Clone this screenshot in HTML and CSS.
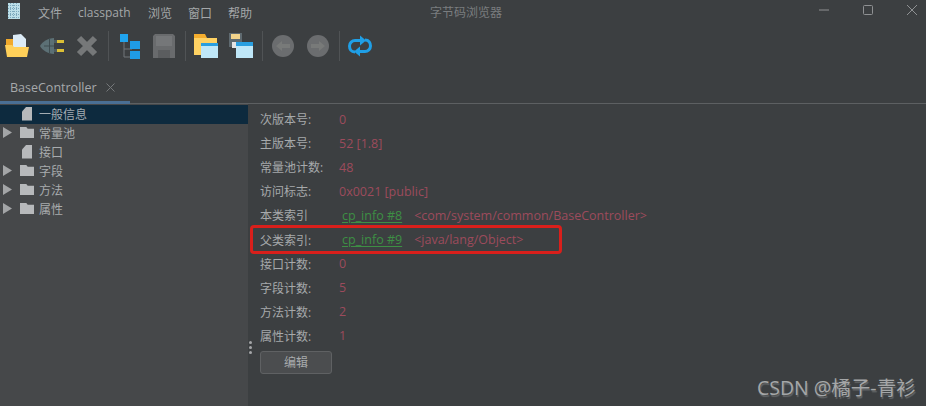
FILE: index.html
```html
<!DOCTYPE html>
<html lang="en">
<head>
    <meta charset="UTF-8">
    <title>字节码浏览器</title>
    <link rel="stylesheet" href="styles.css">
</head>
<body>
<div class="window">
    <div class="title-bar">
        <svg class="app-icon" width="12" height="16" viewBox="0 0 12 16">
            <rect width="12" height="16" fill="#bcdfe9"/>
            <path d="M0 2.5H12M0 5.5H12M0 8.5H12M0 11.5H12M0 14.5H12M2.5 0V16M5.5 0V16M8.5 0V16" stroke="#7ba8bc" stroke-width="1" stroke-dasharray="1 1"/>
        </svg>
        <div class="menu">
            <span>文件</span>
            <span class="menu-wide">classpath</span>
            <span>浏览</span>
            <span>窗口</span>
            <span>帮助</span>
        </div>
        <div class="window-title">字节码浏览器</div>
        <div class="window-buttons">
            <svg width="12" height="12" viewBox="0 0 12 12"><path d="M1 6H11" stroke="#8f9193" stroke-width="1"/></svg>
            <svg width="12" height="12" viewBox="0 0 12 12"><rect x="1.5" y="1.5" width="9" height="9" rx="1" fill="none" stroke="#8f9193"/></svg>
            <svg width="12" height="12" viewBox="0 0 12 12"><path d="M1 1L11 11M11 1L1 11" stroke="#8f9193"/></svg>
        </div>
    </div>

    <div class="toolbar">
        <!-- open -->
        <svg class="tool" width="26" height="26" viewBox="0 0 26 26">
            <path d="M2 6H9V11H20V14H2Z" fill="#f0a92c"/>
            <path d="M9 2L17 1L22 6V14H9Z" fill="#dcebf6"/>
            <path d="M1 12H8L10 14H25L23 24H3Z" fill="#ffd059"/>
        </svg>
        <!-- plug -->
        <svg class="tool" width="26" height="26" viewBox="0 0 26 26">
            <path d="M15 5V21C9 21 3 17 1 13C3 9 9 5 15 5Z" fill="#5c7075"/>
            <path d="M10 5H11V21H10Z" fill="#3f4d51"/>
            <path d="M5 13H15" stroke="#3f4d51"/>
            <rect x="18" y="7" width="7" height="3" fill="#dcbf35"/>
            <rect x="18" y="16" width="7" height="3" fill="#dcbf35"/>
            <path d="M15 7H18V10H15ZM15 16H18V19H15Z" fill="#4d5c60"/>
        </svg>
        <!-- close -->
        <svg class="tool" width="26" height="26" viewBox="0 0 26 26">
            <path d="M5 5L21 21M21 5L5 21" stroke="#767879" stroke-width="6"/>
        </svg>
        <div class="tool-sep"></div>
        <!-- tree -->
        <svg class="tool" width="26" height="26" viewBox="0 0 26 26">
            <path d="M8 8V24H16M8 16H16" stroke="#71777b" fill="none"/>
            <path d="M4 1H12V9H4Z" fill="#20a4ee"/>
            <rect x="14" y="8" width="10" height="8" fill="#1f9be6"/>
            <rect x="14" y="18" width="10" height="8" fill="#1f9be6"/>
        </svg>
        <!-- save, disabled -->
        <svg class="tool" width="26" height="26" viewBox="0 0 26 26">
            <path d="M4 1H22L24 3V25H2V3Z" fill="#696b6d"/>
            <path d="M5 3H21V13H5Z" fill="#757779"/>
            <path d="M7 17H19V25H7Z" fill="#5b5d5f"/>
        </svg>
        <div class="tool-sep"></div>
        <!-- folder with window -->
        <svg class="tool" width="26" height="26" viewBox="0 0 26 26">
            <path d="M1 1H12L14 5H24V10H1Z" fill="#f4ad2e"/>
            <path d="M1 5H24V22H1Z" fill="#ffd263"/>
            <rect x="8" y="10" width="17" height="15" fill="#bfe7f8"/>
            <rect x="8" y="10" width="17" height="3" fill="#2a9fe0"/>
        </svg>
        <!-- save with window -->
        <svg class="tool" width="26" height="26" viewBox="0 0 26 26">
            <rect x="1" y="0" width="13" height="14" fill="#5f6a70"/>
            <rect x="3" y="1" width="9" height="5" fill="#f1d28a"/>
            <rect x="4" y="9" width="7" height="6" fill="#e4e4e4"/>
            <rect x="8" y="9" width="17" height="16" fill="#bfe7f8"/>
            <rect x="8" y="9" width="17" height="4" fill="#2a9fe0"/>
        </svg>
        <div class="tool-sep"></div>
        <!-- back -->
        <svg class="tool" width="26" height="26" viewBox="0 0 26 26">
            <circle cx="13" cy="13" r="11" fill="#6b6d6f"/>
            <path d="M6 13L12 8V11H20V15H12V18Z" fill="#787a79"/>
        </svg>
        <!-- forward -->
        <svg class="tool" width="26" height="26" viewBox="0 0 26 26">
            <circle cx="13" cy="13" r="11" fill="#6b6d6f"/>
            <path d="M20 13L14 8V11H6V15H14V18Z" fill="#787a79"/>
        </svg>
        <div class="tool-sep"></div>
        <!-- refresh -->
        <svg class="tool" width="26" height="26" viewBox="0 0 26 26">
            <path d="M8 19C4 19 2.500 16 2.500 13C2.500 10 5 7.500 8 7.500H15" fill="none" stroke="#1f9fe6" stroke-width="3"/>
            <path d="M18 7C22 7 23.500 10 23.500 13C23.500 16 21 18.500 18 18.500H11" fill="none" stroke="#1f9fe6" stroke-width="3"/>
            <path d="M13 2.500L19 7.500L13 12.500Z" fill="#1f9fe6"/>
            <path d="M13 13.500L7 18.500L13 23.500Z" fill="#1f9fe6"/>
        </svg>
    </div>

    <div class="tabs">
        <div class="tab">
            <span>BaseController</span>
            <svg width="9" height="9" viewBox="0 0 9 9"><path d="M0.5 0.5L8.5 8.5M8.5 0.5L0.5 8.5" stroke="#75787a"/></svg>
        </div>
    </div>

    <div class="content">
        <div class="tree">
            <div class="tree-row selected"><span class="arrow"></span><span class="file-icon"></span>一般信息</div>
            <div class="tree-row"><span class="arrow closed"></span><span class="folder-icon"></span>常量池</div>
            <div class="tree-row"><span class="arrow"></span><span class="file-icon"></span>接口</div>
            <div class="tree-row"><span class="arrow closed"></span><span class="folder-icon"></span>字段</div>
            <div class="tree-row"><span class="arrow closed"></span><span class="folder-icon"></span>方法</div>
            <div class="tree-row"><span class="arrow closed"></span><span class="folder-icon"></span>属性</div>
        </div>
        <div class="splitter"><i></i><i></i><i></i></div>
        <div class="details">
            <div class="row"><label>次版本号:</label><span class="val">0</span></div>
            <div class="row"><label>主版本号:</label><span class="val">52 [1.8]</span></div>
            <div class="row"><label>常量池计数:</label><span class="val">48</span></div>
            <div class="row"><label>访问标志:</label><span class="val">0x0021 [public]</span></div>
            <div class="row"><label>本类索引</label><a class="link">cp_info #8</a><span class="val">&lt;com/system/common/BaseController&gt;</span></div>
            <div class="row highlighted"><label>父类索引:</label><a class="link">cp_info #9</a><span class="val">&lt;java/lang/Object&gt;</span></div>
            <div class="row"><label>接口计数:</label><span class="val">0</span></div>
            <div class="row"><label>字段计数:</label><span class="val">5</span></div>
            <div class="row"><label>方法计数:</label><span class="val">2</span></div>
            <div class="row"><label>属性计数:</label><span class="val">1</span></div>
            <button class="edit-btn">编辑</button>
        </div>
    </div>
    <div class="watermark">CSDN @橘子-青衫</div>
</div>
</body>
</html>
```

FILE: styles.css
```css
* {
    box-sizing: border-box;
}

body {
    margin: 0;
    background-color: #3c3f41;
    font-family: "Open Sans", "Noto Sans CJK SC", sans-serif;
    font-size: 12px;
    color: #a6a9ab;
    overflow: hidden;
}

.window {
    position: relative;
    width: 926px;
    height: 406px;
    display: flex;
    flex-direction: column;
}

/* Title bar */
.title-bar {
    position: relative;
    height: 25px;
    display: flex;
    align-items: center;
    padding-left: 8px;
    flex-shrink: 0;
}

.app-icon {
    margin-top: -3px;
}

.menu {
    display: flex;
    gap: 16px;
    margin-left: 18px;
    color: #a4a7a9;
}

.menu-wide {
    width: 54px;
}

.window-title {
    position: absolute;
    left: 430px;
    top: 3px;
    font-size: 12px;
    color: #7a7d7f;
}

.window-buttons {
    position: absolute;
    right: 8px;
    top: 4px;
    display: flex;
    gap: 32px;
}

/* Toolbar */
.toolbar {
    height: 40px;
    display: flex;
    align-items: center;
    padding: 2px 0 0 4px;
    gap: 9px;
    flex-shrink: 0;
}

.tool {
    flex-shrink: 0;
}

.tool-sep {
    width: 1px;
    height: 30px;
    background: #505355;
    margin: 0 -2px 0 -1px;
}

/* Tabs */
.tabs {
    height: 39px;
    flex-shrink: 0;
    border-bottom: 1px solid #5d6062;
    display: flex;
    align-items: flex-end;
}

.tab {
    width: 130px;
    height: 39px;
    padding: 14px 0 0 10px;
    display: flex;
    gap: 9px;
    align-items: flex-start;
    font-size: 12.5px;
    border-bottom: 3px solid #4a6f94;
    margin-bottom: -1px;
}

.tab svg {
    margin-top: 4px;
}

/* Main area */
.content {
    flex: 1;
    display: flex;
    min-height: 0;
}

.tree {
    width: 248px;
    background: #46484a;
    padding-top: 1px;
    flex-shrink: 0;
}

.tree-row {
    height: 19px;
    padding-bottom: 2px;
    display: flex;
    align-items: center;
    color: #a8abad;
}

.tree-row.selected {
    background: #0d2a3e;
    color: #a4acb2;
}

.arrow {
    width: 9px;
    height: 11px;
    margin-left: 3px;
    margin-right: 8px;
}

.arrow.closed {
    background: #a3a5a7;
    clip-path: polygon(0 0, 100% 50%, 0 100%);
}

.file-icon {
    width: 10px;
    height: 14px;
    margin: 0 7px 0 2px;
    background: #b7b9bb;
    clip-path: polygon(45% 0, 100% 0, 100% 100%, 0 100%, 0 35%);
}

.folder-icon {
    width: 14px;
    height: 11px;
    margin-right: 5px;
    margin-left: 0;
    background: #b7b9bb;
    clip-path: polygon(0 0, 45% 0, 55% 15%, 100% 15%, 100% 100%, 0 100%);
}

.splitter {
    width: 4px;
    flex-shrink: 0;
    display: flex;
    flex-direction: column;
    justify-content: center;
    align-items: center;
    gap: 2px;
    padding-top: 185px;
    background: #3c3f41;
    margin-top: 0;
}

.splitter i {
    width: 3px;
    height: 3px;
    border-radius: 50%;
    background: #a4a6a8;
}

.details {
    flex: 1;
    padding: 3px 0 0 8px;
    background: #3c3f41;
}

.row {
    height: 24.1px;
    display: flex;
    align-items: center;
}

.row label {
    width: 79px;
    flex-shrink: 0;
}

.val {
    color: #9c4b5c;
    font-size: 12.5px;
}

.link {
    color: #3d8f44;
    font-size: 12.5px;
    text-decoration: underline;
    text-underline-offset: 2px;
    margin-left: 3px;
    margin-right: 12px;
}

/* red annotation drawn over the row */
.highlighted {
    position: relative;
}

.highlighted::after {
    content: "";
    box-sizing: border-box;
    position: absolute;
    left: -10px;
    top: -2.5px;
    width: 312px;
    height: 29px;
    border: 3px solid #d91f1b;
    border-radius: 4px;
}

.edit-btn {
    display: block;
    width: 72px;
    height: 23px;
    margin-top: 3px;
    background: #4b4d4f;
    border: 1px solid #5f6163;
    border-radius: 3px;
    color: #a8abad;
    font: inherit;
    padding: 0;
}

.watermark {
    position: absolute;
    left: 757px;
    top: 372px;
    font-size: 19.5px;
    color: #a5a7a8;
    white-space: nowrap;
    text-shadow: 1px 2px 1px #636668;
}
```
